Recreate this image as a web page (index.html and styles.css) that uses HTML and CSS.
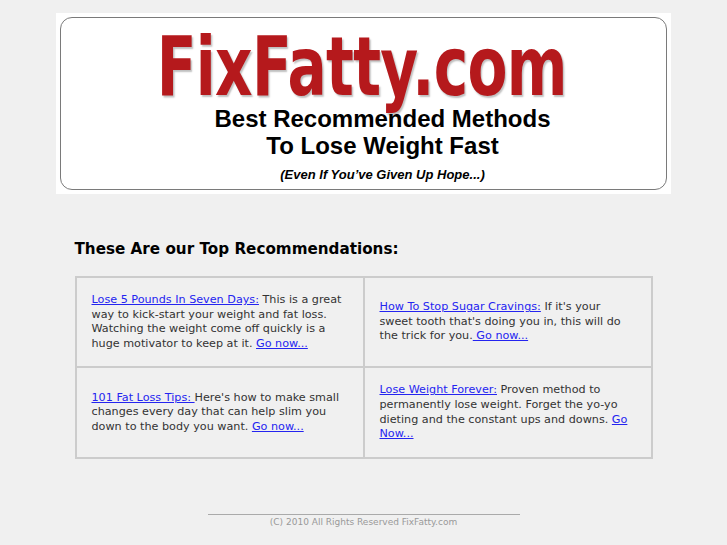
FILE: index.html
```html
<!DOCTYPE html>
<html>
<head>
<meta charset="utf-8">
<title>FixFatty.com</title>
<link rel="stylesheet" href="styles.css">
</head>
<body>
<div class="banner">
  <div class="banner-box">
    <div class="logo-row"><span class="logo">FixFatty.com</span></div>
    <div class="taglines">
      <div class="tagline">Best Recommended Methods<br>To Lose Weight Fast</div>
      <div class="subtag">(Even If You’ve Given Up Hope...)</div>
    </div>
  </div>
</div>
<div class="content">
  <h2 class="heading">These Are our Top Recommendations:</h2>
  <table class="recs">
    <tr>
      <td><a href="#">Lose 5 Pounds In Seven Days:</a> This is a great way to kick-start your weight and fat loss. Watching the weight come off quickly is a huge motivator to keep at it. <a href="#">Go now...</a></td>
      <td><a href="#">How To Stop Sugar Cravings:</a> If it's your sweet tooth that's doing you in, this will do the trick for you.<a href="#"> Go now...</a></td>
    </tr>
    <tr>
      <td><a href="#">101 Fat Loss Tips: </a>Here's how to make small changes every day that can help slim you down to the body you want. <a href="#">Go now...</a></td>
      <td><a href="#">Lose Weight Forever:</a> Proven method to permanently lose weight. Forget the yo-yo dieting and the constant ups and downs. <a href="#">Go Now...</a></td>
    </tr>
  </table>
</div>
<div class="footer">
  <hr class="rule">
  <div class="copy">(C) 2010 All Rights Reserved FixFatty.com</div>
</div>
</body>
</html>
```
FILE: styles.css
```css
html, body {
  margin: 0;
  padding: 0;
}
body {
  background: #f0f0f0;
  font-family: "DejaVu Sans", Verdana, sans-serif;
  color: #333;
}
.banner {
  width: 607px;
  margin: 13px auto 0;
  background: #fff;
  padding: 4px;
}
.banner-box {
  border: 1px solid #7a7a7a;
  border-radius: 12px;
  height: 171px;
  text-align: center;
}
.logo-row {
  height: 87px;
  overflow: visible;
}
.logo {
  display: inline-block;
  font-family: "DejaVu Sans", sans-serif;
  font-weight: bold;
  font-size: 82px;
  line-height: 84px;
  color: #b5191c;
  letter-spacing: -1px;
  transform: scaleX(0.71);
  transform-origin: center;
  text-shadow: 2px 2px 2px rgba(0, 0, 0, 0.25);
  white-space: nowrap;
  margin-top: 7px;
  margin-right: 4px;
}
.taglines {
  padding-left: 38px;
  font-family: "Liberation Sans", Arial, sans-serif;
  color: #000;
}
.tagline {
  font-weight: bold;
  font-size: 24px;
  line-height: 27px;
  margin-top: 0;
}
.subtag {
  font-weight: bold;
  font-style: italic;
  font-size: 13px;
  line-height: 16px;
  margin-top: 8px;
}
.content {
  width: 578px;
  margin: 0 auto;
}
.heading {
  font-size: 15.2px;
  font-weight: bold;
  color: #000;
  margin: 46px 0 18px;
  line-height: 18px;
}
.recs {
  width: 578px;
  border-collapse: separate;
  border-spacing: 0;
  border: 1px solid #cccccc;
  table-layout: fixed;
}
.recs td {
  border: 1px solid #cccccc;
  padding: 15px;
  font-size: 11.2px;
  line-height: 14.6px;
  vertical-align: middle;
  color: #333;
}
.recs a {
  color: #2424f0;
  text-decoration: underline;
}
.footer {
  margin-top: 55px;
  text-align: center;
}
.rule {
  width: 312px;
  margin: 0 auto;
  border: 0;
  border-top: 1px solid #aaaaaa;
  height: 0;
}
.copy {
  font-size: 9px;
  color: #999;
  margin-top: 2px;
}
```
